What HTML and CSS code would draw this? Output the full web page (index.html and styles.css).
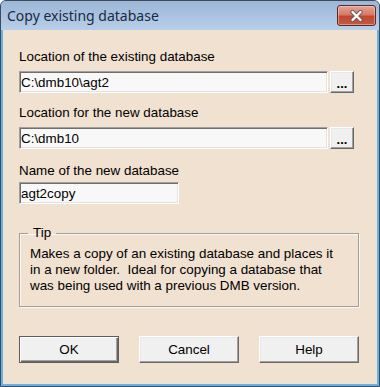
FILE: index.html
```html
<!DOCTYPE html>
<html>
<head>
<meta charset="utf-8">
<link rel="stylesheet" href="styles.css">
</head>
<body>
<div class="window">
  <div class="titlebar">
    <span class="title">Copy existing database</span>
    <div class="close">
      <svg width="13" height="12" viewBox="0 0 13 12">
        <path d="M2.5 2 L10.5 10 M10.5 2 L2.5 10" stroke="#6b5a58" stroke-width="4.2" stroke-linecap="round" fill="none"/>
        <path d="M2.5 2 L10.5 10 M10.5 2 L2.5 10" stroke="#ffffff" stroke-width="2.4" stroke-linecap="round" fill="none"/>
      </svg>
    </div>
  </div>
  <div class="client">
    <label class="lbl lbl1">Location of the existing database</label>
    <div class="row row1">
      <input class="tb tb-wide" type="text" value="C:\dmb10\agt2">
      <button class="btn browse">...</button>
    </div>
    <label class="lbl lbl2">Location for the new database</label>
    <div class="row row2">
      <input class="tb tb-wide" type="text" value="C:\dmb10">
      <button class="btn browse">...</button>
    </div>
    <label class="lbl lbl3">Name of the new database</label>
    <input class="tb tb-short" type="text" value="agt2copy">
    <fieldset class="tip">
      <legend>Tip</legend>
      <p>Makes a copy of an existing database and places it<br>in a new folder.&nbsp; Ideal for copying a database that<br>was being used with a previous DMB version.</p>
    </fieldset>
    <div class="actions">
      <button class="btn push default">OK</button>
      <button class="btn push">Cancel</button>
      <button class="btn push">Help</button>
    </div>
  </div>
</div>
</body>
</html>
```
FILE: styles.css
```css
html, body {
  margin: 0;
  padding: 0;
  background: #ffffff;
}

.window {
  width: 380px;
  height: 387px;
  box-sizing: border-box;
  border: 1px solid #3e4a5a;
  border-radius: 6px 6px 0 0;
  display: flex;
  flex-direction: column;
  overflow: hidden;
  background: #62b4e6;
}

.titlebar {
  height: 29px;
  flex: none;
  display: flex;
  justify-content: space-between;
  align-items: flex-start;
  background: linear-gradient(to bottom, #9cb6d6 0%, #a8c1e0 45%, #b8cfe9 100%);
}

.title {
  margin: 5px 0 0 6px;
  font-family: "Noto Sans", sans-serif;
  font-size: 14px;
  line-height: 20px;
  color: #1b2a42;
}

.close {
  width: 39px;
  height: 21px;
  box-sizing: border-box;
  margin: 4px 3px 0 0;
  border: 1px solid #5a2a28;
  border-radius: 3px;
  background: linear-gradient(to bottom, #e3a596 0%, #d77a68 45%, #c4462f 55%, #c25a44 100%);
  box-shadow: inset 0 0 0 1px rgba(255, 220, 210, 0.45);
  display: flex;
  align-items: center;
  justify-content: center;
}

.close svg {
  display: block;
  margin-left: -1px;
}

.client {
  flex: 1;
  margin: 0 2px 2px 2px;
  background: #f0e1d1;
  padding: 19px 0 0 16px;
  display: flex;
  flex-direction: column;
  align-items: flex-start;
  font-family: "Liberation Sans", Arial, sans-serif;
  font-size: 13.4px;
  color: #000;
}

.lbl {
  display: block;
  line-height: 15px;
}

.lbl2 { margin-top: 12px; }
.lbl3 { margin-top: 14px; }

.row {
  display: flex;
  gap: 2px;
  margin-top: 7px;
}

.tb {
  box-sizing: border-box;
  height: 22px;
  margin: 0;
  padding: 0 0 0 1px;
  font-family: "Liberation Sans", Arial, sans-serif;
  font-size: 13.4px;
  line-height: 18px;
  color: #000;
  background: #f8f8f8;
  border: 1px solid;
  border-color: #a0a0a0 #ffffff #ffffff #a0a0a0;
  box-shadow: inset 1px 1px 0 #6e6e6e, inset -1px -1px 0 #e3e3e3;
  outline: none;
}

.tb-wide { width: 309px; }

.tb-short {
  width: 160px;
  margin-top: 4px;
}

.btn {
  box-sizing: border-box;
  margin: 0;
  padding: 0;
  font-family: "Liberation Sans", Arial, sans-serif;
  font-size: 13.4px;
  color: #000;
  background: #f0f0f0;
  border: 1px solid;
  border-color: #ffffff #696969 #696969 #ffffff;
  box-shadow: inset -1px -1px 0 #a0a0a0, inset 1px 1px 0 #e8e8e8;
}

.browse {
  width: 24px;
  height: 22px;
  font-size: 13px;
  font-weight: bold;
  line-height: 14px;
  padding-top: 4px;
}

.tip {
  box-sizing: border-box;
  width: 340px;
  margin: 22px 0 0 0;
  padding: 6px 8px 12px 8px;
  border: 1px solid #a0a0a0;
  box-shadow: inset 1px 1px 0 #fbf6f0, 1px 1px 0 #fbf6f0;
  min-width: 0;
}

.tip legend {
  padding: 0 5px;
  line-height: 14px;
}

.tip p {
  margin: 0;
  padding-left: 2px;
  line-height: 16px;
}

.actions {
  display: flex;
  gap: 20px;
  margin-top: 29px;
}

.push {
  width: 100px;
  height: 27px;
  line-height: 15px;
}

.default {
  border: 1px solid #5c5c5c;
  box-shadow: inset 1px 1px 0 #ffffff, inset -1px -1px 0 #696969, inset -2px -2px 0 #a0a0a0;
}
```
